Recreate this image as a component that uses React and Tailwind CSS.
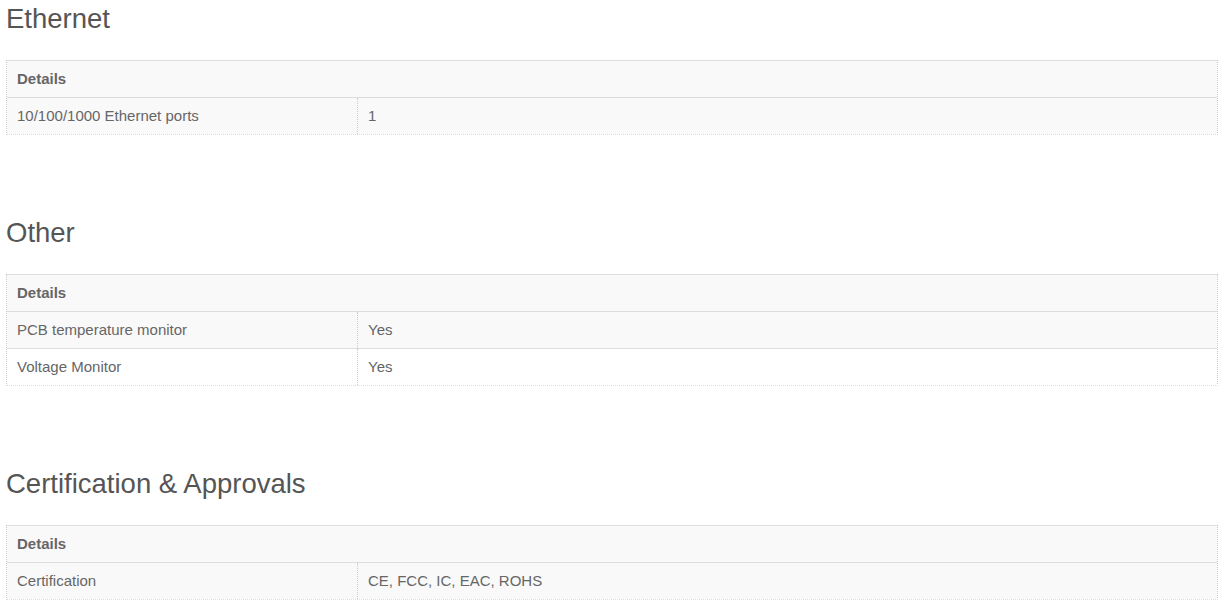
import React from 'react';

const sections = [
  { title: 'Ethernet', rows: [['10/100/1000 Ethernet ports', '1']] },
  { title: 'Other', rows: [['PCB temperature monitor', 'Yes'], ['Voltage Monitor', 'Yes']] },
  { title: 'Certification & Approvals', rows: [['Certification', 'CE, FCC, IC, EAC, ROHS']] },
];

const SpecTable = ({ rows }) => (
  <div className="w-[1212px] border-x border-dotted border-x-[#ccc] border-b border-b-[#ddd] text-[15px] leading-[20px] text-[#666]">
    <div className="border-t border-[#ddd] bg-[#f9f9f9] px-[10px] py-[8px] font-bold">Details</div>
    {rows.map(([label, value], i) => (
      <div key={label} className={`flex border-t border-[#ddd] ${i % 2 === 0 ? 'bg-[#f9f9f9]' : 'bg-white'}`}>
        <div className="w-[351px] shrink-0 border-r border-dotted border-[#ccc] px-[10px] py-[8px]">{label}</div>
        <div className="flex-1 px-[10px] py-[8px]">{value}</div>
      </div>
    ))}
  </div>
);

export default function App() {
  return (
    <div className="min-h-screen bg-white px-[6px] pt-[3px] font-['Liberation_Sans',Arial,sans-serif]">
      {sections.map((s) => (
        <div key={s.title} className="mb-[82px]">
          <h3 className="mb-[26px] h-[31px] text-[27.5px] leading-[31px] font-normal text-[#555]">{s.title}</h3>
          <SpecTable rows={s.rows} />
        </div>
      ))}
    </div>
  );
}
